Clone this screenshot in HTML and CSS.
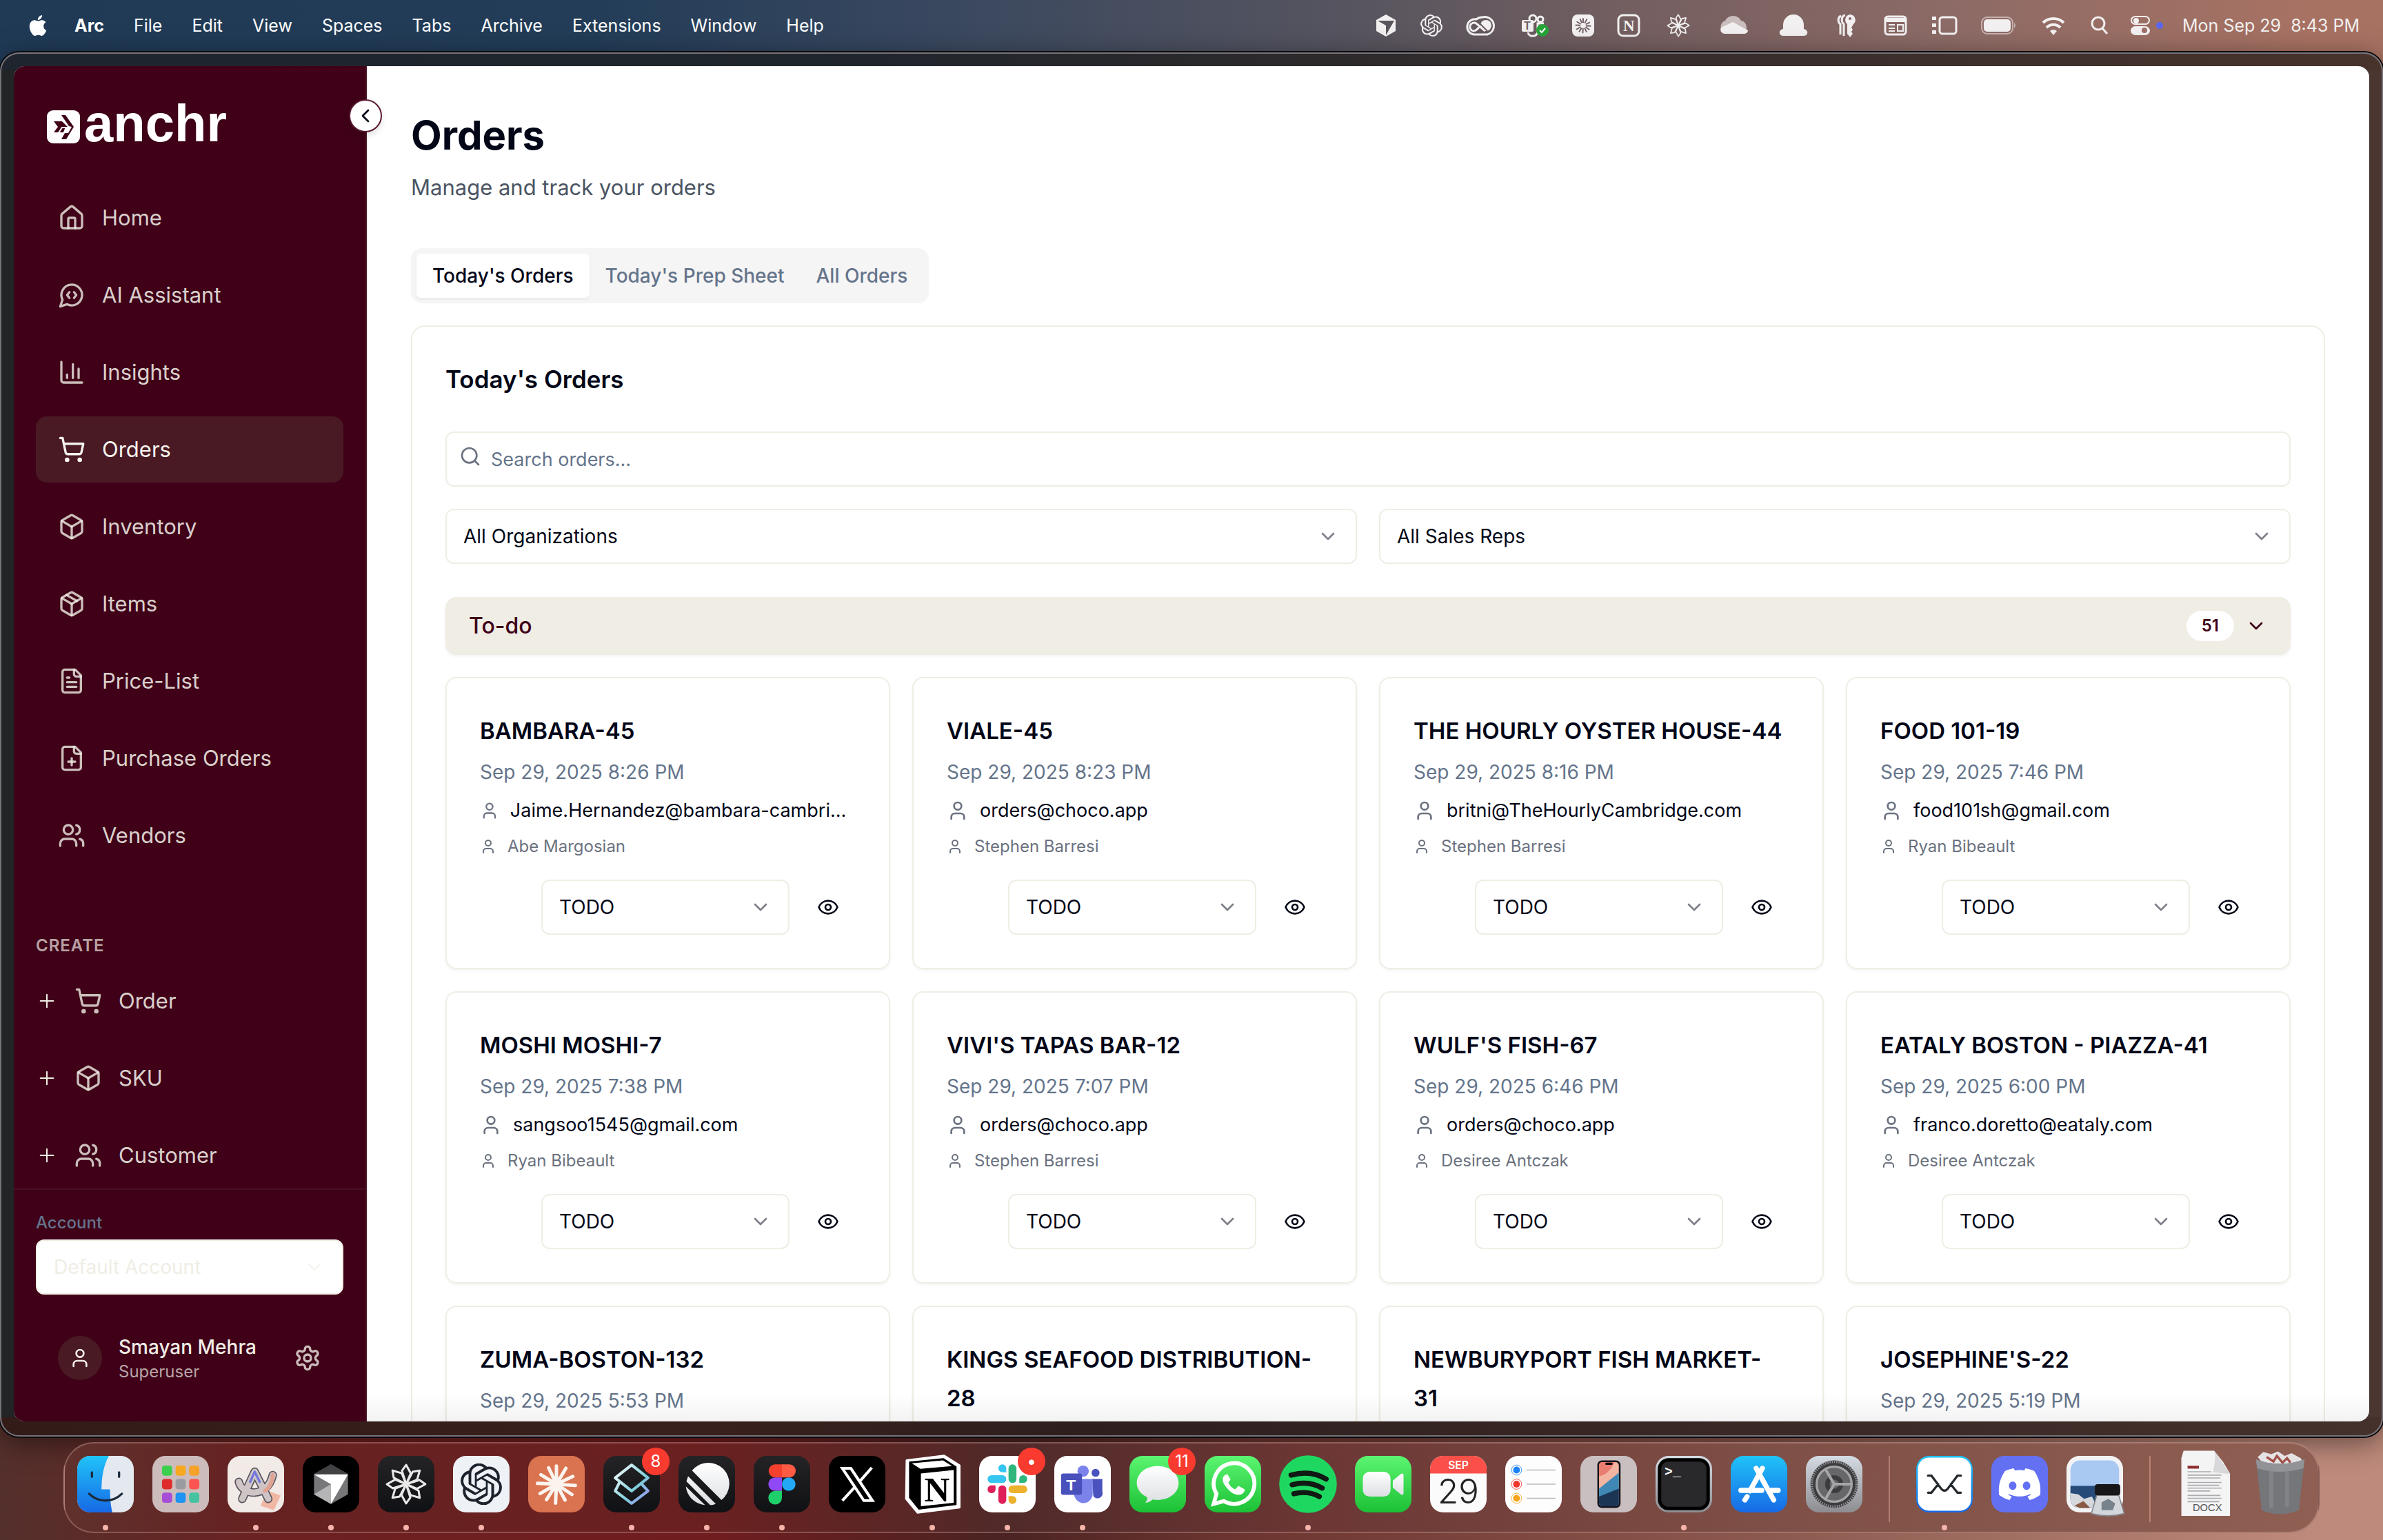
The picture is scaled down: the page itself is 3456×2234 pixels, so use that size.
FILE: index.html
```html
<!DOCTYPE html>
<html lang="en">

<head>
    <meta charset="UTF-8">
    <title>Orders - anchr</title>
    <link rel="stylesheet" href="styles.css">
</head>

<body>
    <!-- shared icons -->
    <svg class="sprite" aria-hidden="true">
        <symbol id="house" viewBox="0 0 24 24"><path d="M15 21v-8a1 1 0 0 0-1-1h-4a1 1 0 0 0-1 1v8"/><path d="M3 10a2 2 0 0 1 .709-1.528l7-5.999a2 2 0 0 1 2.582 0l7 5.999A2 2 0 0 1 21 10v9a2 2 0 0 1-2 2H5a2 2 0 0 1-2-2z"/></symbol>
        <symbol id="chat" viewBox="0 0 24 24"><path d="M10 9.5 8 12l2 2.5"/><path d="m14 9.5 2 2.5-2 2.5"/><path d="M7.9 20A9 9 0 1 0 4 16.1L2 22Z"/></symbol>
        <symbol id="chart" viewBox="0 0 24 24"><path d="M3 3v16a2 2 0 0 0 2 2h16"/><path d="M18 17V9"/><path d="M13 17V5"/><path d="M8 17v-3"/></symbol>
        <symbol id="cart" viewBox="0 0 24 24"><circle cx="8" cy="21" r="1"/><circle cx="19" cy="21" r="1"/><path d="M2.05 2.05h2l2.66 12.42a2 2 0 0 0 2 1.58h9.78a2 2 0 0 0 1.95-1.57l1.65-7.43H5.12"/></symbol>
        <symbol id="box" viewBox="0 0 24 24"><path d="M21 8a2 2 0 0 0-1-1.73l-7-4a2 2 0 0 0-2 0l-7 4A2 2 0 0 0 3 8v8a2 2 0 0 0 1 1.73l7 4a2 2 0 0 0 2 0l7-4A2 2 0 0 0 21 16Z"/><path d="m3.3 7 8.7 5 8.7-5"/><path d="M12 22V12"/></symbol>
        <symbol id="package" viewBox="0 0 24 24"><path d="M21 8a2 2 0 0 0-1-1.73l-7-4a2 2 0 0 0-2 0l-7 4A2 2 0 0 0 3 8v8a2 2 0 0 0 1 1.73l7 4a2 2 0 0 0 2 0l7-4A2 2 0 0 0 21 16Z"/><path d="m3.3 7 8.7 5 8.7-5"/><path d="M12 22V12"/><path d="m7.5 4.27 9 5.15"/></symbol>
        <symbol id="file-text" viewBox="0 0 24 24"><path d="M15 2H6a2 2 0 0 0-2 2v16a2 2 0 0 0 2 2h12a2 2 0 0 0 2-2V7Z"/><path d="M14 2v4a2 2 0 0 0 2 2h4"/><path d="M10 9H8"/><path d="M16 13H8"/><path d="M16 17H8"/></symbol>
        <symbol id="file-plus" viewBox="0 0 24 24"><path d="M15 2H6a2 2 0 0 0-2 2v16a2 2 0 0 0 2 2h12a2 2 0 0 0 2-2V7Z"/><path d="M14 2v4a2 2 0 0 0 2 2h4"/><path d="M9 15h6"/><path d="M12 18v-6"/></symbol>
        <symbol id="users" viewBox="0 0 24 24"><path d="M16 21v-2a4 4 0 0 0-4-4H6a4 4 0 0 0-4 4v2"/><circle cx="9" cy="7" r="4"/><path d="M22 21v-2a4 4 0 0 0-3-3.87"/><path d="M16 3.13a4 4 0 0 1 0 7.75"/></symbol>
        <symbol id="user" viewBox="0 0 24 24"><path d="M19 21v-2a4 4 0 0 0-4-4H9a4 4 0 0 0-4 4v2"/><circle cx="12" cy="7" r="4"/></symbol>
        <symbol id="plus" viewBox="0 0 24 24"><path d="M5 12h14"/><path d="M12 5v14"/></symbol>
        <symbol id="gear" viewBox="0 0 24 24"><path d="M12.22 2h-.44a2 2 0 0 0-2 2v.18a2 2 0 0 1-1 1.73l-.43.25a2 2 0 0 1-2 0l-.15-.08a2 2 0 0 0-2.73.73l-.22.38a2 2 0 0 0 .73 2.73l.15.1a2 2 0 0 1 1 1.72v.51a2 2 0 0 1-1 1.74l-.15.09a2 2 0 0 0-.73 2.73l.22.38a2 2 0 0 0 2.73.73l.15-.08a2 2 0 0 1 2 0l.43.25a2 2 0 0 1 1 1.73V20a2 2 0 0 0 2 2h.44a2 2 0 0 0 2-2v-.18a2 2 0 0 1 1-1.73l.43-.25a2 2 0 0 1 2 0l.15.08a2 2 0 0 0 2.73-.73l.22-.39a2 2 0 0 0-.73-2.73l-.15-.08a2 2 0 0 1-1-1.74v-.5a2 2 0 0 1 1-1.74l.15-.09a2 2 0 0 0 .73-2.73l-.22-.38a2 2 0 0 0-2.73-.73l-.15.08a2 2 0 0 1-2 0l-.43-.25a2 2 0 0 1-1-1.73V4a2 2 0 0 0-2-2z"/><circle cx="12" cy="12" r="3"/></symbol>
        <symbol id="eye" viewBox="0 0 24 24"><path d="M2.062 12.348a1 1 0 0 1 0-.696 10.75 10.75 0 0 1 19.876 0 1 1 0 0 1 0 .696 10.75 10.75 0 0 1-19.876 0"/><circle cx="12" cy="12" r="3"/></symbol>
        <symbol id="search" viewBox="0 0 24 24"><circle cx="11" cy="11" r="8"/><path d="m21 21-4.3-4.3"/></symbol>
        <symbol id="down" viewBox="0 0 24 24"><path d="m6 9 6 6 6-6"/></symbol>
        <symbol id="left" viewBox="0 0 24 24"><path d="m15 18-6-6 6-6"/></symbol>
        <symbol id="openai" viewBox="0 0 24 24"><path d="M22.2819 9.8211a5.9847 5.9847 0 0 0-.5157-4.9108 6.0462 6.0462 0 0 0-6.5098-2.9A6.0651 6.0651 0 0 0 4.9807 4.1818a5.9847 5.9847 0 0 0-3.9977 2.9 6.0462 6.0462 0 0 0 .7427 7.0966 5.98 5.98 0 0 0 .511 4.9107 6.051 6.051 0 0 0 6.5146 2.9001A5.9847 5.9847 0 0 0 13.2599 24a6.0557 6.0557 0 0 0 5.7718-4.2058 5.9894 5.9894 0 0 0 3.9977-2.9001 6.0557 6.0557 0 0 0-.7475-7.0729zm-9.022 12.6081a4.4755 4.4755 0 0 1-2.8764-1.0408l.1419-.0804 4.7783-2.7582a.7948.7948 0 0 0 .3927-.6813v-6.7369l2.02 1.1686a.071.071 0 0 1 .038.052v5.5826a4.504 4.504 0 0 1-4.4945 4.4944zm-9.6607-4.1254a4.4708 4.4708 0 0 1-.5346-3.0137l.142.0852 4.783 2.7582a.7712.7712 0 0 0 .7806 0l5.8428-3.3685v2.3324a.0804.0804 0 0 1-.0332.0615L9.74 19.9502a4.4992 4.4992 0 0 1-6.1408-1.6464zM2.3408 7.8956a4.485 4.485 0 0 1 2.3655-1.9728V11.6a.7664.7664 0 0 0 .3879.6765l5.8144 3.3543-2.0201 1.1685a.0757.0757 0 0 1-.071 0l-4.8303-2.7865A4.504 4.504 0 0 1 2.3408 7.872zm16.5963 3.8558L13.1038 8.364 15.1192 7.2a.0757.0757 0 0 1 .071 0l4.8303 2.7913a4.4944 4.4944 0 0 1-.6765 8.1042v-5.6772a.79.79 0 0 0-.407-.667zm2.0107-3.0231l-.142-.0852-4.7735-2.7818a.7759.7759 0 0 0-.7854 0L9.409 9.2297V6.8974a.0662.0662 0 0 1 .0284-.0615l4.8303-2.7866a4.4992 4.4992 0 0 1 6.6802 4.66zM8.3065 12.863l-2.02-1.1638a.0804.0804 0 0 1-.038-.0567V6.0742a4.4992 4.4992 0 0 1 7.3757-3.4537l-.142.0805L8.704 5.459a.7948.7948 0 0 0-.3927.6813zm1.0976-2.3654l2.602-1.4998 2.6069 1.4998v2.9994l-2.5974 1.4997-2.6067-1.4997Z"/></symbol>
        <symbol id="pinwheel" viewBox="0 0 100 100">
            <g fill="none" stroke="currentColor" stroke-width="5" stroke-linejoin="round">
                <path id="petal" d="M50 50 40 18 50 4 61 24Z"/>
                <use href="#petal" transform="rotate(45 50 50)"/><use href="#petal" transform="rotate(90 50 50)"/><use href="#petal" transform="rotate(135 50 50)"/><use href="#petal" transform="rotate(180 50 50)"/><use href="#petal" transform="rotate(225 50 50)"/><use href="#petal" transform="rotate(270 50 50)"/><use href="#petal" transform="rotate(315 50 50)"/>
            </g>
        </symbol>
        <symbol id="burst" viewBox="0 0 100 100">
            <path d="M50 50V8M50 50 72 13M50 50 88 32M50 50 94 53M50 50 86 74M50 50 70 87M50 50 48 94M50 50 27 86M50 50 12 72M50 50 6 48M50 50 14 28M50 50 32 12" fill="none" stroke="currentColor" stroke-width="8" stroke-linecap="round"/>
        </symbol>
        <linearGradient id="gBlue" x2="0" y2="1"><stop stop-color="#1fc3f8"/><stop offset="1" stop-color="#1769e6"/></linearGradient>
        <linearGradient id="gGreen" x2="0" y2="1"><stop stop-color="#5cf571"/><stop offset="1" stop-color="#1cc135"/></linearGradient>
        <linearGradient id="gGrey" x2="0" y2="1"><stop stop-color="#d5dbe3"/><stop offset="1" stop-color="#8d8d91"/></linearGradient>
        <linearGradient id="gDark" x2="0" y2="1"><stop stop-color="#242326"/><stop offset="1" stop-color="#101114"/></linearGradient>
        <linearGradient id="gWhite" x2="0" y2="1"><stop stop-color="#ffffff"/><stop offset="1" stop-color="#dcdfe2"/></linearGradient>
        <linearGradient id="gCopy" x2="1" y2="1"><stop stop-color="#ffffff"/><stop offset=".6" stop-color="#7fd0dc"/><stop offset="1" stop-color="#9d8cf0"/></linearGradient>
    </svg>

    <header class="menubar">
        <nav class="menus">
            <svg class="apple" viewBox="0 0 24 24"><path d="M12.152 6.896c-.948 0-2.415-1.078-3.96-1.04-2.04.027-3.91 1.183-4.961 3.014-2.117 3.675-.546 9.103 1.519 12.09 1.013 1.454 2.208 3.09 3.792 3.039 1.52-.065 2.09-.987 3.935-.987 1.831 0 2.35.987 3.96.948 1.637-.026 2.676-1.48 3.676-2.948 1.156-1.688 1.636-3.325 1.662-3.415-.039-.013-3.182-1.221-3.22-4.857-.026-3.04 2.48-4.494 2.597-4.559-1.429-2.09-3.623-2.324-4.39-2.376-2-.156-3.675 1.09-4.61 1.09zM15.53 3.83c.843-1.012 1.4-2.427 1.245-3.83-1.207.052-2.662.805-3.532 1.818-.78.896-1.454 2.338-1.273 3.714 1.338.104 2.715-.688 3.559-1.701"/></svg>
            <button class="app-name">Arc</button>
            <button>File</button>
            <button>Edit</button>
            <button>View</button>
            <button>Spaces</button>
            <button>Tabs</button>
            <button>Archive</button>
            <button>Extensions</button>
            <button>Window</button>
            <button>Help</button>
        </nav>
        <div class="status">
            <svg width="36" height="36" viewBox="0 0 36 36"><path d="M18 2 32 10v16L18 34 4 26V10Z"/><path d="M6 11h24L18 32V18Z" fill="#5a555c"/></svg>
            <svg width="32" height="32"><use href="#openai"/></svg>
            <svg width="46" height="32" viewBox="0 0 46 32"><g fill="none" stroke="#f2f0f0" stroke-width="3"><path d="M13 29h20a12 12 0 1 0-7-25 13 13 0 0 0-9 3A11 11 0 1 0 13 29Z"/><path d="m30 24-13-11a6 6 0 1 0-4 11c4 0 6-3 9-7"/></g><circle cx="31" cy="16" r="8"/><path d="m20 11 13 13" stroke="#6a5d61" stroke-width="2"/></svg>
            <svg width="46" height="36" viewBox="0 0 46 36"><g fill="none" stroke="#f2f0f0" stroke-width="3"><circle cx="21" cy="8" r="5"/><circle cx="32" cy="9" r="4"/><path d="M14 28c1 7 12 7 14 0V15h9"/></g><rect x="5" y="10" width="17" height="17" rx="2"/><text x="8" y="24" class="t-glyph">T</text><circle cx="35" cy="25" r="9" fill="#25a537"/><path d="m31 25 3 3 5-6" fill="none" stroke="#fff" stroke-width="2"/></svg>
            <svg width="32" height="34" viewBox="0 0 32 34"><rect y="1" width="32" height="32" rx="8"/><g color="#6f5f62"><use href="#burst" x="4" y="5" width="24" height="24"/></g><circle cx="16" cy="17" r="4"/></svg>
            <svg width="36" height="34" viewBox="0 0 36 34"><rect x="3" y="2" width="30" height="30" rx="7" fill="none" stroke="#f2f0f0" stroke-width="3"/><text x="10" y="25" class="n-glyph">N</text></svg>
            <svg width="44" height="34"><use href="#pinwheel"/></svg>
            <svg width="52" height="32" viewBox="0 0 46 32"><path d="M12 28a10 10 0 0 1-1-19A13 13 0 0 1 34 9a10 10 0 0 1 2 19Z" fill="#c9bdbd"/><path d="M10 28c-5-1-7-5-5-9l17-8 22 12c0 3-3 5-6 5Z"/></svg>
            <svg width="58" height="34" viewBox="0 0 52 34"><path d="M11 22V16a15 15 0 0 1 30 0v6c7 1 7 10 0 10H11c-7 0-7-9 0-10Z"/></svg>
            <svg width="36" height="36" viewBox="0 0 36 36"><path d="M21 2a8 8 0 0 0-4 14v14l4 5 4-5-2-3 2-3-2-3 3-5a8 8 0 0 0-5-14Zm0 4a2 2 0 1 1 0 4 2 2 0 0 1 0-4Z"/><path d="M14 3C8 4 8 13 12 16v17M8 4C3 6 3 13 7 16v15" fill="none" stroke="#f2f0f0" stroke-width="3"/></svg>
            <svg width="38" height="32" viewBox="0 0 38 32"><rect x="4" y="3" width="30" height="26" rx="4" fill="none" stroke="#f2f0f0" stroke-width="3"/><path d="M4 5h30v6H4Z"/><path d="M9 15h9M9 20h9M9 24h9" stroke="#f2f0f0" stroke-width="2"/><path d="M22 15h8v9h-8Z" fill="none" stroke="#f2f0f0" stroke-width="2"/></svg>
            <svg width="40" height="32" viewBox="0 0 40 32"><path d="M2 3h6v5H2zM2 13h6v5H2zM2 23h6v5H2z"/><rect x="13" y="4" width="24" height="24" rx="4" fill="none" stroke="#f2f0f0" stroke-width="3"/></svg>
            <svg width="52" height="28" viewBox="0 0 52 28"><rect x="2" y="2" width="45" height="24" rx="8" fill="none" stroke="#c5b2b0" stroke-width="2"/><rect x="5" y="5" width="39" height="18" rx="5"/><path d="M49 10q4 4 0 8Z" fill="#c5b2b0"/></svg>
            <svg width="44" height="30" viewBox="3 0 44 30"><path d="M10 11a22 22 0 0 1 30 0M15 18a14 14 0 0 1 20 0" fill="none" stroke="#f2f0f0" stroke-width="4"/><path d="M25 29l-5-6a7 7 0 0 1 10 0Z"/></svg>
            <svg width="26" height="28" viewBox="0 0 26 28"><circle cx="11" cy="11" r="9" fill="none" stroke="#f2f0f0" stroke-width="3"/><path d="m17 18 7 8" stroke="#f2f0f0" stroke-width="3"/></svg>
            <svg width="28" height="30" viewBox="0 0 28 30"><rect x="1" y="2" width="26" height="11" rx="6" fill="none" stroke="#f2f0f0" stroke-width="2"/><circle cx="8" cy="8" r="4"/><rect y="16" width="28" height="13" rx="7"/><circle cx="20" cy="22" r="4" fill="#9f7066"/></svg>
            <i class="mic-dot"></i>
            <time>Mon Sep 29&nbsp; 8:43 PM</time>
        </div>
    </header>

    <div class="window">
        <div class="page">
            <aside class="sidebar">
                <button class="collapse" aria-label="Collapse sidebar"><svg class="icon sm"><use href="#left"/></svg></button>
                <a class="logo" href="#">
                    <svg width="48" height="48" viewBox="0 0 48 48"><rect width="48" height="48" rx="9" fill="#fff"/><path d="M10 16h12l8 8-3 0-3 8H10l6-8ZM21 7h6l12 17-11 18h-7l5-9h5l5-9-4-1Z" fill="#3f0018"/><path d="m16 34 6-9h8" fill="none" stroke="#fff" stroke-width="2"/></svg>
                    <span>anchr</span>
                </a>
                <nav class="nav">
                    <a href="#"><svg class="icon"><use href="#house"/></svg>Home</a>
                    <a href="#"><svg class="icon"><use href="#chat"/></svg>AI Assistant</a>
                    <a href="#"><svg class="icon"><use href="#chart"/></svg>Insights</a>
                    <a href="#" class="active"><svg class="icon"><use href="#cart"/></svg>Orders</a>
                    <a href="#"><svg class="icon"><use href="#box"/></svg>Inventory</a>
                    <a href="#"><svg class="icon"><use href="#package"/></svg>Items</a>
                    <a href="#"><svg class="icon"><use href="#file-text"/></svg>Price-List</a>
                    <a href="#"><svg class="icon"><use href="#file-plus"/></svg>Purchase Orders</a>
                    <a href="#"><svg class="icon"><use href="#users"/></svg>Vendors</a>
                </nav>
                <h3 class="create-title">Create</h3>
                <nav class="nav create">
                    <a href="#"><svg class="icon sm thin"><use href="#plus"/></svg><svg class="icon"><use href="#cart"/></svg>Order</a>
                    <a href="#"><svg class="icon sm thin"><use href="#plus"/></svg><svg class="icon"><use href="#box"/></svg>SKU</a>
                    <a href="#"><svg class="icon sm thin"><use href="#plus"/></svg><svg class="icon"><use href="#users"/></svg>Customer</a>
                </nav>
                <div class="account">
                    <label for="account">Account</label>
                    <div class="select faded">
                        <select id="account"><option>Default Account</option></select>
                        <svg class="icon sm"><use href="#down"/></svg>
                    </div>
                    <div class="profile">
                        <span class="avatar"><svg class="icon sm"><use href="#user"/></svg></span>
                        <div class="who">
                            <strong>Smayan Mehra</strong>
                            <small>Superuser</small>
                        </div>
                        <button aria-label="Settings"><svg class="icon"><use href="#gear"/></svg></button>
                    </div>
                </div>
            </aside>

            <main class="main">
                <h1>Orders</h1>
                <p class="sub">Manage and track your orders</p>
                <div class="tabs">
                    <button class="on">Today's Orders</button>
                    <button>Today's Prep Sheet</button>
                    <button>All Orders</button>
                </div>

                <section class="panel">
                    <h2>Today's Orders</h2>
                    <div class="search">
                        <svg class="icon sm"><use href="#search"/></svg>
                        <input type="text" placeholder="Search orders..." aria-label="Search orders">
                    </div>
                    <div class="filters">
                        <div class="select">
                            <select aria-label="Organization"><option>All Organizations</option></select>
                            <svg class="icon sm"><use href="#down"/></svg>
                        </div>
                        <div class="select">
                            <select aria-label="Sales rep"><option>All Sales Reps</option></select>
                            <svg class="icon sm"><use href="#down"/></svg>
                        </div>
                    </div>
                    <button class="group">
                        <span>To-do</span>
                        <span class="count">51</span>
                        <svg class="icon sm"><use href="#down"/></svg>
                    </button>

                    <div class="cards">
                        <article class="card">
                            <h3>BAMBARA-45</h3>
                            <p class="date">Sep 29, 2025 8:26 PM</p>
                            <p class="email"><svg class="icon sm"><use href="#user"/></svg><span>Jaime.Hernandez@bambara-cambridge.com</span></p>
                            <p class="rep"><svg class="icon xs"><use href="#user"/></svg>Abe Margosian</p>
                            <div class="actions">
                                <div class="select"><select aria-label="Status"><option>TODO</option></select><svg class="icon sm"><use href="#down"/></svg></div>
                                <button aria-label="View order"><svg class="icon sm"><use href="#eye"/></svg></button>
                            </div>
                        </article>
                        <article class="card">
                            <h3>VIALE-45</h3>
                            <p class="date">Sep 29, 2025 8:23 PM</p>
                            <p class="email"><svg class="icon sm"><use href="#user"/></svg><span>orders@choco.app</span></p>
                            <p class="rep"><svg class="icon xs"><use href="#user"/></svg>Stephen Barresi</p>
                            <div class="actions">
                                <div class="select"><select aria-label="Status"><option>TODO</option></select><svg class="icon sm"><use href="#down"/></svg></div>
                                <button aria-label="View order"><svg class="icon sm"><use href="#eye"/></svg></button>
                            </div>
                        </article>
                        <article class="card">
                            <h3>THE HOURLY OYSTER HOUSE-44</h3>
                            <p class="date">Sep 29, 2025 8:16 PM</p>
                            <p class="email"><svg class="icon sm"><use href="#user"/></svg><span>britni@TheHourlyCambridge.com</span></p>
                            <p class="rep"><svg class="icon xs"><use href="#user"/></svg>Stephen Barresi</p>
                            <div class="actions">
                                <div class="select"><select aria-label="Status"><option>TODO</option></select><svg class="icon sm"><use href="#down"/></svg></div>
                                <button aria-label="View order"><svg class="icon sm"><use href="#eye"/></svg></button>
                            </div>
                        </article>
                        <article class="card">
                            <h3>FOOD 101-19</h3>
                            <p class="date">Sep 29, 2025 7:46 PM</p>
                            <p class="email"><svg class="icon sm"><use href="#user"/></svg><span>food101sh@gmail.com</span></p>
                            <p class="rep"><svg class="icon xs"><use href="#user"/></svg>Ryan Bibeault</p>
                            <div class="actions">
                                <div class="select"><select aria-label="Status"><option>TODO</option></select><svg class="icon sm"><use href="#down"/></svg></div>
                                <button aria-label="View order"><svg class="icon sm"><use href="#eye"/></svg></button>
                            </div>
                        </article>
                        <article class="card">
                            <h3>MOSHI MOSHI-7</h3>
                            <p class="date">Sep 29, 2025 7:38 PM</p>
                            <p class="email"><svg class="icon sm"><use href="#user"/></svg><span>sangsoo1545@gmail.com</span></p>
                            <p class="rep"><svg class="icon xs"><use href="#user"/></svg>Ryan Bibeault</p>
                            <div class="actions">
                                <div class="select"><select aria-label="Status"><option>TODO</option></select><svg class="icon sm"><use href="#down"/></svg></div>
                                <button aria-label="View order"><svg class="icon sm"><use href="#eye"/></svg></button>
                            </div>
                        </article>
                        <article class="card">
                            <h3>VIVI'S TAPAS BAR-12</h3>
                            <p class="date">Sep 29, 2025 7:07 PM</p>
                            <p class="email"><svg class="icon sm"><use href="#user"/></svg><span>orders@choco.app</span></p>
                            <p class="rep"><svg class="icon xs"><use href="#user"/></svg>Stephen Barresi</p>
                            <div class="actions">
                                <div class="select"><select aria-label="Status"><option>TODO</option></select><svg class="icon sm"><use href="#down"/></svg></div>
                                <button aria-label="View order"><svg class="icon sm"><use href="#eye"/></svg></button>
                            </div>
                        </article>
                        <article class="card">
                            <h3>WULF'S FISH-67</h3>
                            <p class="date">Sep 29, 2025 6:46 PM</p>
                            <p class="email"><svg class="icon sm"><use href="#user"/></svg><span>orders@choco.app</span></p>
                            <p class="rep"><svg class="icon xs"><use href="#user"/></svg>Desiree Antczak</p>
                            <div class="actions">
                                <div class="select"><select aria-label="Status"><option>TODO</option></select><svg class="icon sm"><use href="#down"/></svg></div>
                                <button aria-label="View order"><svg class="icon sm"><use href="#eye"/></svg></button>
                            </div>
                        </article>
                        <article class="card">
                            <h3>EATALY BOSTON - PIAZZA-41</h3>
                            <p class="date">Sep 29, 2025 6:00 PM</p>
                            <p class="email"><svg class="icon sm"><use href="#user"/></svg><span>franco.doretto@eataly.com</span></p>
                            <p class="rep"><svg class="icon xs"><use href="#user"/></svg>Desiree Antczak</p>
                            <div class="actions">
                                <div class="select"><select aria-label="Status"><option>TODO</option></select><svg class="icon sm"><use href="#down"/></svg></div>
                                <button aria-label="View order"><svg class="icon sm"><use href="#eye"/></svg></button>
                            </div>
                        </article>
                        <article class="card">
                            <h3>ZUMA-BOSTON-132</h3>
                            <p class="date">Sep 29, 2025 5:53 PM</p>
                        </article>
                        <article class="card">
                            <h3>KINGS SEAFOOD DISTRIBUTION-<br>28</h3>
                        </article>
                        <article class="card">
                            <h3>NEWBURYPORT FISH MARKET-<br>31</h3>
                        </article>
                        <article class="card">
                            <h3>JOSEPHINE'S-22</h3>
                            <p class="date">Sep 29, 2025 5:19 PM</p>
                        </article>
                    </div>
                </section>
            </main>
        </div>
    </div>

    <footer class="dock">
        <button class="running" aria-label="Finder"><svg viewBox="0 0 100 100"><rect width="100" height="100" rx="23" fill="#e4e9f0"/><path d="M56 0H23A23 23 0 0 0 0 23v54a23 23 0 0 0 23 23h39c-3-13-4-26-4-41H43C43 37 47 16 56 0Z" fill="url(#gBlue)"/><path d="M26 29v8M74 29v8M21 67c16 16 42 16 58 0" fill="none" stroke="#1b2b3c" stroke-width="4" stroke-linecap="round"/></svg></button>
        <button aria-label="Launchpad"><svg viewBox="0 0 100 100"><rect width="100" height="100" rx="23" fill="#cdbcbc"/><rect x="17" y="17" width="18" height="18" rx="5" fill="#3ccf4e"/><rect x="41" y="17" width="18" height="18" rx="5" fill="#f6a81f"/><rect x="65" y="17" width="18" height="18" rx="5" fill="#f5a22a"/><rect x="17" y="41" width="18" height="18" rx="5" fill="#df2c2b"/><rect x="41" y="41" width="18" height="18" rx="5" fill="#9a9ba1"/><rect x="65" y="41" width="18" height="18" rx="5" fill="#fa5550"/><rect x="17" y="65" width="18" height="18" rx="5" fill="#a64fd6"/><rect x="41" y="65" width="18" height="18" rx="5" fill="#1f93f2"/><rect x="65" y="65" width="18" height="18" rx="5" fill="#45c3a0"/></svg></button>
        <button class="running" aria-label="Arc"><svg viewBox="0 0 100 100"><rect width="100" height="100" rx="23" fill="#f1eae6"/><path d="m58 88 14-26 22 8-12 26Z" fill="#f0b7a4"/><g fill="none" stroke-linecap="round" stroke-linejoin="round"><path d="m26 76 22-48 24 48M20 46c6 24 50 30 60-12" stroke="#57545c" stroke-width="15"/><path d="m26 76 22-48 24 48M20 46c6 24 50 30 60-12" stroke="#cfc4c6" stroke-width="11"/><path d="m40 46 8-18 9 18" stroke="#7277dd" stroke-width="4"/><path d="M66 62c8-5 13-15 14-28" stroke="#e2a392" stroke-width="7"/></g></svg></button>
        <button class="running" aria-label="Cursor"><svg viewBox="0 0 100 100"><rect width="100" height="100" rx="23"/><path d="M50 15 80 32v36L50 85 20 68V32Z" fill="#77777a"/><path d="M50 15 80 32H20Z" fill="#424244"/><path d="M20 68 50 50v35Z" fill="#b5b5b7"/><path d="M20 33h60L50 85V50Z" fill="#fff"/></svg></button>
        <button class="running" aria-label="Pinwheel"><svg viewBox="0 0 100 100" color="#e8e8e8"><rect width="100" height="100" rx="23" fill="url(#gDark)"/><use href="#pinwheel" x="13" y="13" width="74" height="74"/></svg></button>
        <button class="running" aria-label="ChatGPT"><svg viewBox="0 0 100 100"><rect width="100" height="100" rx="23" fill="#eef1f5"/><use href="#openai" x="13" y="13" width="74" height="74" fill="#1c232c"/></svg></button>
        <button aria-label="Claude"><svg viewBox="0 0 100 100" color="#fbf3ee"><rect width="100" height="100" rx="23" fill="#d97350"/><use href="#burst" x="12" y="12" width="76" height="76"/></svg></button>
        <button class="running" aria-label="Shapes"><svg viewBox="0 0 100 100"><rect width="100" height="100" rx="23" fill="url(#gDark)"/><path d="M50 16 79 39 50 62 21 39ZM29 46 21 62 50 84 79 62 68 50" fill="none" stroke="url(#gCopy)" stroke-width="5" stroke-linejoin="round"/></svg><span class="badge">8</span></button>
        <button class="running" aria-label="Linear"><svg viewBox="0 0 100 100"><rect width="100" height="100" rx="23" fill="url(#gDark)"/><path d="M24 26A37 37 0 1 1 76 78ZM17 36 66 85c-3 1-7 2-10 2L14 45ZM13 54l34 33C29 85 15 72 13 54Z" fill="url(#gWhite)"/></svg></button>
        <button class="running" aria-label="Figma"><svg viewBox="0 0 100 100"><rect width="100" height="100" rx="23" fill="url(#gDark)"/><path d="M50 15v23H38a11 11 0 0 1 0-23Z" fill="#f4402c"/><path d="M50 15h13a11 11 0 0 1 0 23H50Z" fill="#ff5a44"/><path d="M50 38v24H38a12 12 0 0 1 0-24Z" fill="#8f4af5"/><circle cx="62" cy="50" r="12" fill="#22a8f5"/><path d="M50 62v12a12 12 0 1 1-12-12Z" fill="#1ed06a"/></svg></button>
        <button aria-label="X"><svg viewBox="0 0 100 100"><rect width="100" height="100" rx="23"/><path d="M24 22h15l38 57H62ZM76 21 54 46M46 55 24 79" fill="none" stroke="#fff" stroke-width="5"/></svg></button>
        <button class="running" aria-label="Notion"><svg viewBox="0 0 100 100"><path d="m5 8 66-8 27 17v74l-74 9L4 76Z" fill="#fff" stroke="#fff" stroke-width="4" stroke-linejoin="round"/><path d="m9 10 61-6 23 15v68l-67 8L9 74Z"/><path d="M14 13 69 8l16 10-56 5ZM30 31l58-6v58l-58 6Z" fill="#fff"/><text x="36" y="80" class="notion-n">N</text></svg></button>
        <button class="running" aria-label="Slack"><svg viewBox="0 0 100 100"><rect width="100" height="100" rx="23" fill="#fff"/><g stroke-width="14" stroke-linecap="round"><path d="M22 41h19" stroke="#36c5f0"/><path d="M59 22v19" stroke="#2eb67d"/><path d="M59 59h19" stroke="#ecb22e"/><path d="M41 59v19" stroke="#e01e5a"/></g><path d="M48 29h-7a7 7 0 1 1 7-7Z" fill="#36c5f0"/><path d="M71 48v-7a7 7 0 1 1 7 7Z" fill="#2eb67d"/><path d="M52 71h7a7 7 0 1 1-7 7Z" fill="#ecb22e"/><path d="M29 52v7a7 7 0 1 1-7-7Z" fill="#e01e5a"/></svg><span class="badge">•</span></button>
        <button class="running" aria-label="Teams"><svg viewBox="0 0 100 100"><rect width="100" height="100" rx="23" fill="#fff"/><circle cx="73" cy="30" r="7" fill="#4a53bd"/><path d="M67 41h18v22a9 9 0 0 1-16 8Z" fill="#4a53bd"/><circle cx="51" cy="27" r="10" fill="#7b83eb"/><path d="M35 41h33v24a16 17 0 0 1-33 2Z" fill="#7b83eb"/><rect x="12" y="31" width="37" height="38" rx="4" fill="#4950bc"/><text x="21" y="61" class="teams-t">T</text></svg></button>
        <button aria-label="Messages"><svg viewBox="0 0 100 100"><rect width="100" height="100" rx="23" fill="url(#gGreen)"/><path d="M50 18c21 0 37 13 37 30S71 78 50 78l-9-1c-3 3-7 5-13 6 3-3 4-7 3-10C20 68 13 59 13 48c0-17 16-30 37-30Z" fill="url(#gWhite)"/></svg><span class="badge">11</span></button>
        <button aria-label="WhatsApp"><svg viewBox="0 0 100 100"><rect width="100" height="100" rx="23" fill="url(#gGreen)"/><path d="m16 85 5-18a36 36 0 1 1 13 13Z" fill="none" stroke="#fff" stroke-width="7"/><path d="M38 33c-8 3-8 12 0 22 8 11 18 16 27 13 4-2 6-5 6-9l-11-6-6 6c-6-2-9-6-12-12l4-5-5-9Z" fill="#fff"/></svg></button>
        <button class="running" aria-label="Spotify"><svg viewBox="0 0 100 100"><circle cx="50" cy="50" r="51" fill="#1ed760"/><path d="M20 34c22-6 44-4 62 7M22 51c19-5 38-3 53 6M25 67c16-4 32-2 45 5" fill="none" stroke="#101913" stroke-width="9" stroke-linecap="round"/></svg></button>
        <button aria-label="FaceTime"><svg viewBox="0 0 100 100"><rect width="100" height="100" rx="23" fill="url(#gGreen)"/><rect x="14" y="28" width="49" height="44" rx="12" fill="url(#gWhite)"/><path d="m67 44 14-12c3-2 5-1 5 2v32c0 3-2 4-5 2L67 56Z" fill="url(#gWhite)"/></svg></button>
        <button aria-label="Calendar"><svg viewBox="0 0 100 100"><rect width="100" height="100" rx="23" fill="#fbfbfb"/><path d="M0 31v-8A23 23 0 0 1 23 0h54a23 23 0 0 1 23 23v8Z" fill="#fa5049"/><text x="50" y="23" class="cal-month">SEP</text><text x="50" y="84" class="cal-day">29</text></svg></button>
        <button aria-label="Reminders"><svg viewBox="0 0 100 100"><rect width="100" height="100" rx="23" fill="#fdfdfd"/><g stroke-width="1" fill="none"><circle cx="20" cy="25" r="9" stroke="#1a82f7"/><circle cx="20" cy="50" r="9" stroke="#f2382c"/><circle cx="20" cy="75" r="9" stroke="#f6a41c"/></g><circle cx="20" cy="25" r="6" fill="#1a82f7"/><circle cx="20" cy="50" r="6" fill="#f2382c"/><circle cx="20" cy="75" r="6" fill="#f6a41c"/><path d="M38 25h51M38 50h51M38 75h51" stroke="#b9b9c0" stroke-width="2"/></svg></button>
        <button aria-label="iPhone Mirroring"><svg viewBox="0 0 100 100"><rect width="100" height="100" rx="23" fill="#cabfc0"/><rect x="30" y="8" width="41" height="84" rx="8" fill="#17151a"/><rect x="33" y="11" width="35" height="78" rx="6" fill="#f3b4a2"/><path d="M33 58 68 30v53q0 6-6 6H39q-6 0-6-6Z" fill="#3f88b5"/><path d="m33 72 35-14v25q0 6-6 6H39q-6 0-6-6Z" fill="#1c3555"/><path d="M33 36q16-2 28-25H39q-6 0-6 6Z" fill="#e97d70"/><rect x="44" y="12" width="13" height="4" rx="2"/></svg></button>
        <button class="running" aria-label="Terminal"><svg viewBox="0 0 100 100"><rect width="100" height="100" rx="23" fill="url(#gGrey)"/><rect x="4" y="4" width="92" height="92" rx="19"/><rect x="10" y="10" width="80" height="80" rx="13" fill="#29292b"/><text x="16" y="35" class="prompt">&gt;_</text></svg></button>
        <button aria-label="App Store"><svg viewBox="0 0 100 100"><rect width="100" height="100" rx="23" fill="url(#gBlue)"/><path d="M56 22 34 62M45 22 76 78M18 61h37M71 61h13M29 72l-4 6" stroke="#fff" stroke-width="9" stroke-linecap="round"/></svg></button>
        <button aria-label="System Settings"><svg viewBox="0 0 100 100"><rect width="100" height="100" rx="23" fill="url(#gGrey)"/><circle cx="50" cy="50" r="42" fill="#3c3c3f"/><circle cx="50" cy="50" r="40" fill="none" stroke="#8f8f93" stroke-width="5" stroke-dasharray="2 2"/><circle cx="50" cy="50" r="31" fill="#67676a" stroke="#a5a5a9" stroke-width="4"/><circle cx="50" cy="50" r="12" fill="none" stroke="#3c3c3f" stroke-width="8"/><path d="M50 50h30M50 50 35 24M50 50 35 76" stroke="#a5a5a9" stroke-width="5"/></svg></button>
        <i class="sep"></i>
        <button class="running" aria-label="Mail"><svg viewBox="0 0 100 100"><rect width="100" height="100" rx="23" fill="url(#gBlue)"/><rect x="3" y="3" width="94" height="94" rx="20" fill="#fff"/><path d="M21 35h6l18 24q5 5 10 0l18-24h6M21 65h6l12-15M79 65h-6L61 50" fill="none" stroke="#24292e" stroke-width="4" stroke-linecap="round"/></svg></button>
        <button aria-label="Discord"><svg viewBox="0 0 100 100"><rect width="100" height="100" rx="23" fill="#6470f2"/><svg x="13" y="13" width="74" height="74" viewBox="0 0 24 24" fill="#fff"><path d="M20.317 4.3698a19.7913 19.7913 0 00-4.8851-1.5152.0741.0741 0 00-.0785.0371c-.211.3753-.4447.8648-.6083 1.2495-1.8447-.2762-3.68-.2762-5.4868 0-.1636-.3933-.4058-.8742-.6177-1.2495a.077.077 0 00-.0785-.037 19.7363 19.7363 0 00-4.8852 1.515.0699.0699 0 00-.0321.0277C.5334 9.0458-.319 13.5799.0992 18.0578a.0824.0824 0 00.0312.0561c2.0528 1.5076 4.0413 2.4228 5.9929 3.0294a.0777.0777 0 00.0842-.0276c.4616-.6304.8731-1.2952 1.226-1.9942a.076.076 0 00-.0416-.1057c-.6528-.2476-1.2743-.5495-1.8722-.8923a.077.077 0 01-.0076-.1277c.1258-.0943.2517-.1923.3718-.2914a.0743.0743 0 01.0776-.0105c3.9278 1.7933 8.18 1.7933 12.0614 0a.0739.0739 0 01.0785.0095c.1202.099.246.1981.3728.2924a.077.077 0 01-.0066.1276 12.2986 12.2986 0 01-1.873.8914.0766.0766 0 00-.0407.1067c.3604.698.7719 1.3628 1.225 1.9932a.076.076 0 00.0842.0286c1.961-.6067 3.9495-1.5219 6.0023-3.0294a.077.077 0 00.0313-.0552c.5004-5.177-.8382-9.6739-3.5485-13.6604a.061.061 0 00-.0312-.0286zM8.02 15.3312c-1.1825 0-2.1569-1.0857-2.1569-2.419 0-1.3332.9555-2.4189 2.157-2.4189 1.2108 0 2.1757 1.0952 2.1568 2.419 0 1.3332-.9555 2.4189-2.1569 2.4189zm7.9748 0c-1.1825 0-2.1569-1.0857-2.1569-2.419 0-1.3332.9554-2.4189 2.1569-2.4189 1.2108 0 2.1757 1.0952 2.1568 2.419 0 1.3332-.946 2.4189-2.1568 2.4189Z"/></svg></svg></button>
        <button aria-label="Preview"><svg viewBox="0 0 100 100"><rect width="100" height="100" rx="23" fill="#f3f3f5"/><rect x="7" y="8" width="86" height="84" rx="17" fill="#a9c8f2"/><path d="M7 53h86v22q0 17-17 17H24Q7 92 7 75Z" fill="#274b78"/><path d="m7 66 14 2 10 8 14-4 10 20H24Q7 92 7 75Z" fill="#d5d8dc"/><path d="m14 88 16-8 12 12H24Z" fill="#8a5a45"/><path d="M54 68h38l10 34q-28 8-58 0Z" fill="#d3d6da" stroke="#85888c" stroke-width="2"/><path d="m62 82 12-6 12 8-4 12H62Z" fill="#77828c"/><rect x="50" y="50" width="45" height="20" rx="5" fill="#17171a"/></svg></button>
        <i class="sep"></i>
        <button aria-label="Document"><svg viewBox="0 0 100 100"><path d="M12-9h54l16 20 12 20v75H8V4Z" fill="#f4f4f4"/><path d="M66-9c4 10 0 26-2 38l30 3Z" fill="#d8d8da"/><path d="M19 20h20" stroke="#8f2b30" stroke-width="5"/><path d="M19 28h42M19 34h60M19 39h58M19 47h60M19 52h56M19 57h60M19 62h40M19 70h58M19 75h60M19 81h56" stroke="#a9abae" stroke-width="2"/><text x="28" y="98" class="docx">DOCX</text></svg></button>
        <button aria-label="Trash"><svg viewBox="0 0 100 100"><path d="m10 2 10-9 14 4 12-5 12 8 12-5 16 9 4 6-16 10H26Z" fill="#e4e2e2"/><path d="m26 2 12 8 6-10 10 12 8-8 6 8" fill="none" stroke="#a15048" stroke-width="4"/><path d="M7 6q42 16 86 0l-10 90q-34 14-66 0Z" fill="#74767a"/><path d="M7 6q42 16 86 0l-2 16q-42 12-82 0Z" fill="#919397"/><path d="M34 20v72M62 20v70" stroke="#8f9196" stroke-width="7" opacity=".5"/></svg></button>
    </footer>
</body>

</html>
```

FILE: styles.css
```css
* {
    margin: 0;
    padding: 0;
    box-sizing: border-box;
}

body {
    height: 100vh;
    display: flex;
    flex-direction: column;
    overflow: hidden;
    font-family: Inter, "Liberation Sans", sans-serif;
    font-size: 28px;
    line-height: 40px;
    color: #020617;
    background:
        linear-gradient(to right, #203a56 0%, #233d58 25%, #3a485f 40%, #55545f 56%, #755f60 69%, #8b6a66 81%, #a87263 97%) top / 100% 50% no-repeat,
        linear-gradient(to right, #54302c 0%, #6d2121 12%, #701d1f 30%, #4a2322 42%, #6d3530 52%, #8d5a50 75%, #bd8a7b 97%) bottom / 100% 50% no-repeat;
}

button {
    border: none;
    background: none;
    font: inherit;
    color: inherit;
}

a {
    color: inherit;
    text-decoration: none;
}

.sprite {
    position: absolute;
    width: 0;
    height: 0;
}

.icon {
    width: 40px;
    height: 40px;
    flex: none;
    fill: none;
    stroke: currentColor;
    stroke-width: 2;
    stroke-linecap: round;
    stroke-linejoin: round;
}

.icon.sm {
    width: 32px;
    height: 32px;
}

.icon.xs {
    width: 24px;
    height: 24px;
}

.icon.thin {
    stroke-width: 1.5;
}

/* menu bar */
.menubar {
    height: 76px;
    flex: none;
    padding: 0 34px 2px 40px;
    display: flex;
    justify-content: space-between;
    align-items: center;
    font-size: 25px;
    color: #fff;
}

.menus {
    display: flex;
    align-items: center;
    gap: 43px;
}

.apple {
    width: 30px;
    height: 32px;
    fill: #fff;
    margin-right: -5px;
}

.app-name {
    font-weight: 700;
}

.status {
    display: flex;
    align-items: center;
    gap: 32px;
    color: #f2f0f0;
    fill: #f2f0f0;
}

.status time {
    margin-left: -4px;
}

.mic-dot {
    width: 10px;
    height: 10px;
    border-radius: 50%;
    background: #5b66f0;
    margin-left: -23px;
}

.t-glyph {
    font: bold 16px "Liberation Sans", sans-serif;
    fill: #6f5f62;
}

.n-glyph {
    font: bold 23px "Liberation Serif", serif;
}

/* browser window */
.window {
    flex: 1;
    min-height: 0;
    padding: 18px 18px 20px;
    border: 2px solid #77737a;
    border-radius: 28px;
    box-shadow: 0 0 0 2px #0b0b0d, 0 8px 40px rgba(0, 0, 0, 0.5);
    background:
        linear-gradient(to right, #331b18, #38201c 30%, #2e1f1e 45%, #45312c) bottom / 100% 26px no-repeat,
        linear-gradient(to right, #1e252e, #20262d 35%, #2d2a2c 55%, #48332c) top / 100% 24px no-repeat,
        linear-gradient(to right, #222425 50%, #4a3630 50%);
}

.page {
    height: 100%;
    display: flex;
    border-radius: 16px;
    overflow: hidden;
    background: #fff;
    position: relative;
}

/* soft shade above the dock */
.page::after {
    content: "";
    position: absolute;
    left: 512px;
    right: 0;
    bottom: 0;
    height: 40px;
    background: linear-gradient(transparent, rgba(0, 0, 0, 0.05));
}

/* sidebar */
.sidebar {
    position: relative;
    width: 512px;
    flex: none;
    display: flex;
    flex-direction: column;
    background: #3f0018;
    border-right: 2px solid #4b1324;
    color: #f0ede5;
}

.collapse {
    position: absolute;
    top: 48px;
    right: -24px;
    width: 48px;
    height: 48px;
    display: flex;
    align-items: center;
    justify-content: center;
    border: 2px solid #5a1a30;
    border-radius: 50%;
    background: #fff;
    color: #020617;
    box-shadow: 0 4px 10px rgba(0, 0, 0, 0.12);
}

.logo {
    display: flex;
    align-items: flex-end;
    gap: 6px;
    height: 112px;
    padding-left: 48px;
    color: #fff;
    font: bold 76px "Liberation Sans", sans-serif;
}

.logo span {
    line-height: 58px;
}

.nav {
    display: flex;
    flex-direction: column;
    gap: 16px;
    padding: 60px 32px 0;
    font-size: 31px;
    color: rgba(240, 237, 229, 0.9);
}

.nav a {
    height: 96px;
    display: flex;
    align-items: center;
    gap: 24px;
    padding: 0 32px;
    border-radius: 16px;
}

.nav .icon {
    color: rgba(240, 237, 229, 0.8);
}

.nav a.active,
.nav a.active .icon {
    color: #f7f4ee;
}

.nav a.active {
    background: #491a24;
}

.create-title {
    margin-top: 96px;
    padding-left: 32px;
    font-size: 24px;
    font-weight: 600;
    line-height: 32px;
    letter-spacing: 1px;
    text-transform: uppercase;
    color: rgba(240, 237, 229, 0.7);
}

.nav.create {
    padding-top: 16px;
}

.nav.create a {
    padding: 0;
}

.nav.create .thin {
    color: #f0ede5;
}

.account {
    margin-top: auto;
    padding: 32px;
    border-top: 2px solid #471020;
}

.account label {
    display: block;
    margin-bottom: 8px;
    font-size: 24px;
    font-weight: 500;
    line-height: 32px;
    color: #64748b;
}

.profile {
    display: flex;
    align-items: center;
    gap: 24px;
    margin-top: 32px;
    padding: 24px 32px;
}

.avatar {
    width: 64px;
    height: 64px;
    display: flex;
    align-items: center;
    justify-content: center;
    border-radius: 50%;
    background: #491a24;
}

.who {
    flex: 1;
    display: flex;
    flex-direction: column;
}

.who strong {
    font-weight: 500;
}

.who small {
    font-size: 24px;
    line-height: 32px;
    color: rgba(240, 237, 229, 0.7);
}

.profile button {
    height: 40px;
    opacity: 0.8;
}

/* selects */
.select {
    position: relative;
}

.select select {
    width: 100%;
    height: 80px;
    padding: 0 24px;
    appearance: none;
    border: 2px solid #f0ede5;
    border-radius: 12px;
    background: #fff;
    font: inherit;
    color: inherit;
}

.select .icon {
    position: absolute;
    right: 26px;
    top: 24px;
    opacity: 0.5;
    pointer-events: none;
}

.faded select {
    color: #f0ede5;
}

/* main */
.main {
    flex: 1;
    min-width: 0;
    overflow: hidden;
    padding: 64px;
}

h1 {
    font-size: 58px;
    font-weight: 700;
    line-height: 72px;
}

.sub {
    margin-top: 16px;
    font-size: 31px;
    line-height: 48px;
    color: #4b5563;
}

.tabs {
    display: inline-flex;
    height: 80px;
    margin-top: 64px;
    padding: 8px;
    border-radius: 16px;
    background: #f5f5f5;
    color: #64748b;
    font-weight: 500;
}

.tabs button {
    padding: 0 23px;
    border-radius: 6px;
}

.tabs .on {
    background: #fff;
    color: #020617;
    box-shadow: 0 2px 4px rgba(0, 0, 0, 0.06);
}

.panel {
    margin-top: 32px;
    padding: 48px;
    border: 2px solid #f0ede5;
    border-radius: 20px;
}

h2 {
    font-size: 35px;
    font-weight: 600;
    line-height: 56px;
}

.search {
    position: relative;
    margin-top: 48px;
}

.search .icon {
    position: absolute;
    left: 20px;
    top: 20px;
    color: #6b7280;
}

.search input {
    display: block;
    width: 100%;
    height: 80px;
    padding: 0 24px 0 64px;
    border: 2px solid #f0ede5;
    border-radius: 12px;
    font: inherit;
    font-size: 27px;
}

.search input::placeholder {
    color: #64748b;
}

.filters {
    display: grid;
    grid-template-columns: 1fr 1fr;
    gap: 32px;
    margin-top: 32px;
}

.group {
    width: 100%;
    height: 84px;
    margin: 48px 0 32px;
    padding: 0 32px;
    display: flex;
    align-items: center;
    gap: 16px;
    border: 2px solid #f0ede5;
    border-radius: 16px;
    background: #f0ede5;
    color: #3f0018;
    font-size: 32px;
    font-weight: 500;
    box-shadow: 0 2px 4px rgba(0, 0, 0, 0.06);
}

.count {
    margin-left: auto;
    padding: 0 22px;
    border-radius: 22px;
    background: #fff;
    font-size: 24px;
    font-weight: 600;
    line-height: 44px;
}

.cards {
    display: grid;
    grid-template-columns: repeat(4, minmax(0, 1fr));
    grid-auto-rows: minmax(424px, auto);
    gap: 32px;
}

.card {
    padding: 48px;
    border: 2px solid #f0ede5;
    border-radius: 16px;
    box-shadow: 0 2px 4px rgba(0, 0, 0, 0.05);
}

.card h3 {
    font-size: 33px;
    font-weight: 600;
    line-height: 56px;
}

.date {
    margin-top: 12px;
    color: #64748b;
}

.email {
    display: flex;
    align-items: center;
    gap: 16px;
    margin-top: 16px;
    font-size: 27px;
}

.email span {
    overflow: hidden;
    text-overflow: ellipsis;
    white-space: nowrap;
}

.email .icon {
    color: #6b7280;
    flex-shrink: 1;
}

.rep {
    display: flex;
    align-items: center;
    gap: 16px;
    margin-top: 16px;
    font-size: 24px;
    line-height: 32px;
    color: #6b7280;
}

.actions {
    display: flex;
    justify-content: flex-end;
    align-items: center;
    gap: 16px;
    margin-top: 32px;
}

.actions .select {
    width: 360px;
}

.actions button {
    width: 80px;
    height: 80px;
    display: flex;
    align-items: center;
    justify-content: center;
}

/* dock */
.dock {
    align-self: center;
    flex: none;
    display: flex;
    gap: 27px;
    height: 132px;
    margin: 8px 0 10px;
    padding: 18px 14px 0 18px;
    border: 2px solid rgba(255, 220, 210, 0.25);
    border-radius: 44px;
    background: linear-gradient(to right, #5f312d, #652221 8%, #6b2020 28%, #502a29 42%, #6b3634 55%, #7e4f46 75%, #8f5f53);
}

.dock button {
    position: relative;
    width: 82px;
    height: 82px;
}

.dock button > svg {
    display: block;
    width: 82px;
    height: 82px;
    overflow: visible;
}

.running::after {
    content: "";
    position: absolute;
    left: 37px;
    bottom: -26px;
    width: 8px;
    height: 8px;
    border-radius: 50%;
    background: #f5b5aa;
}

.badge {
    position: absolute;
    top: -12px;
    right: -14px;
    width: 40px;
    height: 40px;
    border-radius: 50%;
    background: #f93a2f;
    color: #fff;
    font-size: 24px;
    line-height: 40px;
    text-align: center;
}

.sep {
    width: 2px;
    height: 96px;
    margin: 0 11px;
    background: rgba(255, 190, 175, 0.4);
}

.notion-n {
    font: bold 62px "Liberation Serif", serif;
}

.teams-t {
    font: bold 28px "Liberation Sans", sans-serif;
    fill: #fff;
}

.cal-month {
    font: 600 19px Inter, sans-serif;
    fill: #fff;
    text-anchor: middle;
}

.cal-day {
    font: 300 60px Inter, sans-serif;
    fill: #222;
    text-anchor: middle;
}

.prompt {
    font: bold 24px "Liberation Mono", monospace;
    fill: #fff;
}

.docx {
    font: 18px "Liberation Sans", sans-serif;
    fill: #55585c;
}
```
